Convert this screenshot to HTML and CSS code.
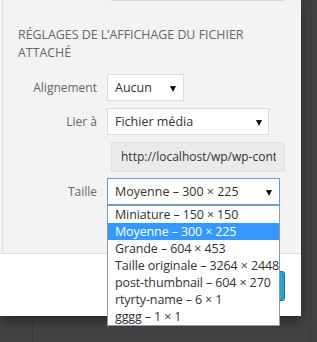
FILE: index.html
```html
<!DOCTYPE html>
<html lang="fr">
<head>
    <meta charset="UTF-8">
    <meta name="viewport" content="width=device-width, initial-scale=1.0">
    <title>Réglages de l'affichage</title>
    <link rel="stylesheet" href="styles.css">
</head>
<body>

    <!-- Backdrop behind the media modal -->
    <div class="backdrop">
        <div class="backdrop-col"></div>
        <div class="backdrop-row"></div>
    </div>

    <div class="modal">
        <div class="sidebar">
            <div class="sidebar-inner">
                <div class="prev-field"></div>

                <h2 class="settings-title">Réglages de l’affichage du fichier attaché</h2>

                <div class="setting">
                    <span class="setting-label">Alignement</span>
                    <div class="select select-small">
                        <span class="select-value">Aucun</span>
                        <span class="select-arrow"></span>
                    </div>
                </div>

                <div class="setting">
                    <span class="setting-label">Lier à</span>
                    <div class="select select-medium">
                        <span class="select-value">Fichier média</span>
                        <span class="select-arrow"></span>
                    </div>
                </div>

                <div class="setting setting-url">
                    <div class="url-field">
                        <span class="url-text">http://localhost/wp/wp-content/uploads/2014/05/image.jpg</span>
                    </div>
                </div>

                <div class="setting">
                    <span class="setting-label">Taille</span>
                    <div class="select select-large is-open">
                        <span class="select-value">Moyenne – 300 × 225</span>
                        <span class="select-arrow"></span>

                        <!-- Open dropdown list -->
                        <ul class="select-list">
                            <li>Miniature – 150 × 150</li>
                            <li class="selected">Moyenne – 300 × 225</li>
                            <li>Grande – 604 × 453</li>
                            <li>Taille originale – 3264 × 2448</li>
                            <li>post-thumbnail – 604 × 270</li>
                            <li>rtyrty-name – 6 × 1</li>
                            <li>gggg – 1 × 1</li>
                        </ul>
                    </div>
                </div>
            </div>
        </div>

        <div class="toolbar">
            <a class="button-primary" href="#" aria-label="Insérer dans l’article"></a>
        </div>
    </div>

</body>
</html>
```

FILE: styles.css
```css
/* General Styling */
body {
    font-family: 'Open Sans', 'Noto Sans', sans-serif;
    background: #424242;
    margin: 0;
    padding: 0;
    width: 317px;
    height: 342px;
    overflow: hidden;
    position: relative;
}

/* Backdrop lines */
.backdrop-col {
    position: absolute;
    left: 310px;
    top: 0;
    width: 1px;
    height: 342px;
    background: #3a3a3a;
}

.backdrop-row {
    position: absolute;
    left: 32px;
    top: 316px;
    width: 1px;
    height: 26px;
    background: #3a3a3a;
}

/* Modal */
.modal {
    position: relative;
    width: 301px;
    height: 316px;
    background: #fff;
    box-shadow: 0 4px 12px rgba(0, 0, 0, 0.45);
}

.sidebar {
    background: #f3f3f3;
    padding-left: 2px;
    height: 253px;
    border-bottom: 1px solid #dddddd;
}

.sidebar-inner {
    border-left: 1px solid #dddddd;
    height: 253px;
    padding-left: 15px;
}

.prev-field {
    margin-left: 93px;
    width: 174px;
    height: 0;
    border-bottom: 1px solid #d8d8d8;
}

.settings-title {
    width: 255px;
    margin: 25px 0 12px;
    font-size: 12.4px;
    font-weight: normal;
    line-height: 18px;
    text-transform: uppercase;
    color: #666;
}

/* Rows */
.setting {
    display: flex;
    align-items: flex-start;
    margin-bottom: 7px;
}

.setting-label {
    width: 79px;
    padding-right: 10px;
    text-align: right;
    font-size: 12px;
    line-height: 18px;
    padding-top: 5px;
    color: #666;
}

.setting-url {
    padding-left: 93px;
    margin-bottom: 6px;
}

.url-field {
    width: 155px;
    height: 28px;
    padding: 0 8px 0 9px;
    background: #eaeaea;
    border: 1px solid #e2e2e2;
    font-size: 12px;
    line-height: 28px;
    color: #333;
}

.url-text {
    display: block;
    white-space: nowrap;
    overflow: hidden;
}

/* Selects */
.select {
    position: relative;
    box-sizing: border-box;
    height: 27px;
    border: 1px solid #dddddd;
    background: #fff;
    padding-left: 7px;
    font-size: 12.5px;
    line-height: 26px;
    color: #333;
}

.select-small { width: 77px; }
.select-medium { width: 162px; }
.select-large { width: 173px; }

.select.is-open {
    border-color: #5b9dd9;
}

.select-arrow {
    position: absolute;
    right: 7px;
    top: 11px;
    width: 0;
    height: 0;
    border-left: 3.5px solid transparent;
    border-right: 3.5px solid transparent;
    border-top: 6px solid #111;
}

.select-medium .select-arrow { right: 6px; }

.select-list {
    position: absolute;
    left: -1px;
    top: 26px;
    width: 173px;
    box-sizing: border-box;
    margin: 0;
    padding: 0;
    list-style: none;
    background: #fff;
    border: 1px solid #7f9db9;
    z-index: 5;
}

.select-list li {
    height: 17px;
    line-height: 17px;
    padding-left: 7px;
    font-size: 12.5px;
    letter-spacing: -0.12px;
    color: #333;
    white-space: nowrap;
    overflow: hidden;
}

.select-list li.selected {
    background: #3399ff;
    color: #fff;
}

/* Toolbar */
.toolbar {
    position: relative;
    height: 62px;
    background: #fff;
}

.button-primary {
    position: absolute;
    right: 16px;
    top: 17px;
    width: 60px;
    height: 28px;
    background: #2ea2cc;
    border: 1px solid #0074a2;
    border-radius: 3px;
}
```
